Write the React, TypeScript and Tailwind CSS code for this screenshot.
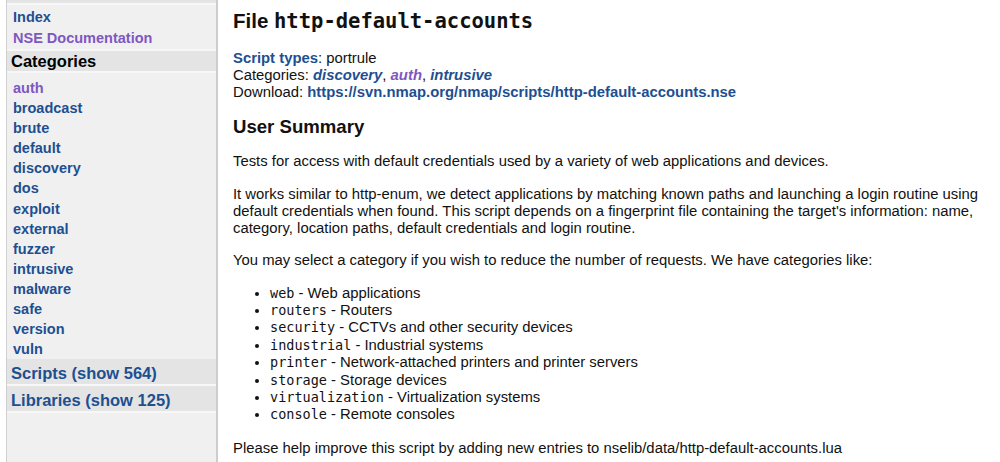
import React from 'react';

const categories = [
  'auth',
  'broadcast',
  'brute',
  'default',
  'discovery',
  'dos',
  'exploit',
  'external',
  'fuzzer',
  'intrusive',
  'malware',
  'safe',
  'version',
  'vuln',
];

const visited = ['auth'];

const types = [
  ['web', 'Web applications'],
  ['routers', 'Routers'],
  ['security', 'CCTVs and other security devices'],
  ['industrial', 'Industrial systems'],
  ['printer', 'Network-attached printers and printer servers'],
  ['storage', 'Storage devices'],
  ['virtualization', 'Virtualization systems'],
  ['console', 'Remote consoles'],
];

const sans = "font-['Liberation_Sans',Arial,sans-serif]";
const mono = "font-['DejaVu_Sans_Mono',monospace]";

export default function App() {
  return (
    <div className={`flex min-h-[462px] bg-white text-[#111] ${sans}`}>
      {/* Sidebar */}
      <aside className="ml-[6px] w-[212px] shrink-0 border-l border-r-2 border-l-[#cfcfcf] border-r-[#cdcdcd] bg-[#f0f0f0]">
        <div className="h-[5px] border-b-2 border-[#f7f7f7] bg-[#e4e4e4]" />
        <nav className="px-[6px] pt-[2px] text-[14.5px] font-bold leading-[21px]">
          <a className="block text-[#1d4f91]">Index</a>
          <a className="block text-[#7e57c2]">NSE Documentation</a>
        </nav>
        <h3 className="border-y-2 border-[#f7f7f7] bg-[#e4e4e4] px-[4px] text-[16.5px] font-bold leading-[20px] text-black">
          Categories
        </h3>
        <ul className="px-[6px] pt-[5px] text-[14.5px] font-bold leading-[20.1px]">
          {categories.map((c) => (
            <li key={c}>
              <a className={visited.includes(c) ? 'text-[#7e57c2]' : 'text-[#1d4f91]'}>{c}</a>
            </li>
          ))}
        </ul>
        <div className="border-b-2 border-[#f7f7f7] bg-[#e4e4e4] px-[4px] pt-[3px] text-[16.5px] font-bold leading-[22px] text-[#1d4f91]">
          Scripts (show 564)
        </div>
        <div className="border-b-2 border-[#f7f7f7] bg-[#e4e4e4] px-[4px] pt-[3px] text-[16.5px] font-bold leading-[22px] text-[#1d4f91]">
          Libraries (show 125)
        </div>
      </aside>

      {/* Main content */}
      <main className="min-w-0 flex-1 pl-[15px] pr-[12px] text-[14.85px] leading-[17px]">
        <h1 className="mt-[9px] mb-[16.5px] text-[20.5px] font-bold leading-[24px]">
          File <span className={mono}>http-default-accounts</span>
        </h1>

        <div className="mb-[15.5px]">
          <div>
            <a className="font-bold text-[#1d4f91]">Script types</a>: portrule
          </div>
          <div>
            Categories: <a className="font-bold italic text-[#1d4f91]">discovery</a>,{' '}
            <a className="font-bold italic text-[#7e57c2]">auth</a>,{' '}
            <a className="font-bold italic text-[#1d4f91]">intrusive</a>
          </div>
          <div>
            Download:{' '}
            <a className="font-bold text-[#1d4f91]">https://svn.nmap.org/nmap/scripts/http-default-accounts.nse</a>
          </div>
        </div>

        <h2 className="mb-[14.5px] text-[18.6px] font-bold leading-[22px]">User Summary</h2>

        <p className="mb-[16px]">
          Tests for access with default credentials used by a variety of web applications and devices.
        </p>
        <p className="mb-[15px]">
          It works similar to http-enum, we detect applications by matching known paths and launching a login
          routine using default credentials when found. This script depends on a fingerprint file containing the
          target's information: name, category, location paths, default credentials and login routine.
        </p>
        <p className="mb-[16px]">
          You may select a category if you wish to reduce the number of requests. We have categories like:
        </p>

        <ul className="mb-[16.5px] list-disc pl-[37px] leading-[17.4px]">
          {types.map(([code, label]) => (
            <li key={code}>
              <code className={`${mono} text-[13.5px] leading-none`}>{code}</code> - {label}
            </li>
          ))}
        </ul>

        <p>Please help improve this script by adding new entries to nselib/data/http-default-accounts.lua</p>
      </main>
    </div>
  );
}
